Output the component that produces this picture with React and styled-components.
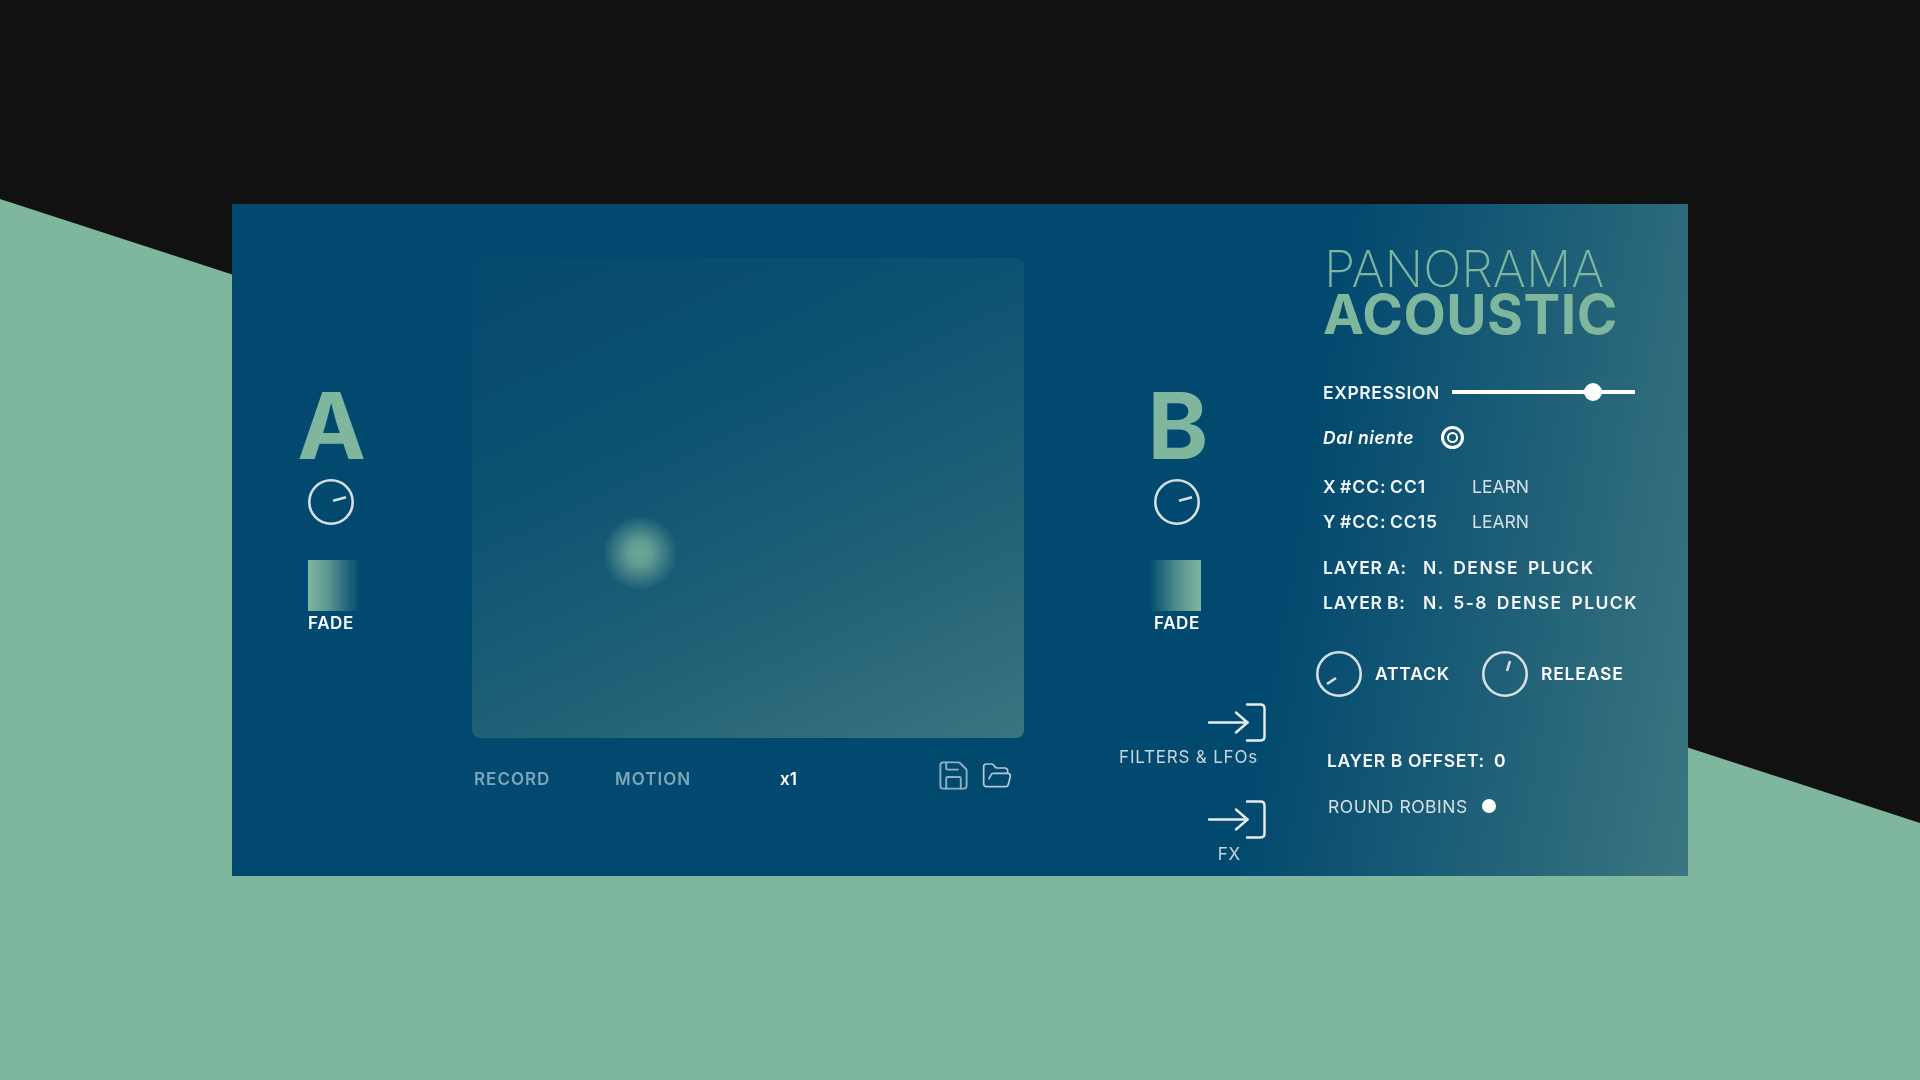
import React from "react";
import styled, { createGlobalStyle } from "styled-components";
import { Save, FolderOpen } from "lucide-react";

const GlobalStyle = createGlobalStyle`
  html, body { margin: 0; padding: 0; background: #111111; }
  body { font-family: Inter, "Liberation Sans", sans-serif; }
`;

const Stage = styled.div`
  position: relative;
  width: 1920px;
  height: 1080px;
  overflow: hidden;
  background: #111111;
  padding-top: 204px;
  box-sizing: border-box;
  &::before {
    content: "";
    position: absolute;
    inset: 0;
    background: #7fb69e;
    clip-path: polygon(0 199px, 100% 823px, 100% 100%, 0 100%);
  }
`;

const Panel = styled.section`
  position: relative;
  width: 1456px;
  height: 672px;
  margin: 0 auto;
  display: grid;
  grid-template-columns: 240px 552px 299px 1fr;
  background: linear-gradient(100deg, #02496f 0%, #02496f 71%, #3b7680 100%);
  color: #fff;
  filter: blur(0.35px);
`;

const Channel = styled.div`
  width: 198px;
  display: flex;
  flex-direction: column;
  align-items: center;
  padding-top: 184px;
`;

const ChannelB = styled(Channel)`
  margin-left: 54px;
`;

const Letter = styled.div`
  height: 76px;
  line-height: 76px;
  font-size: 92px;
  font-weight: 700;
  color: #7fb69e;
  margin-left: ${(p) => p.$nudge || 0}px;
`;

const KnobSvg = styled.svg`
  display: block;
  flex: none;
  width: 46px;
  height: 46px;
`;

const ChannelKnob = styled.div`
  margin-top: 15px;
`;

const Fade = styled.div`
  width: 52px;
  height: 51px;
  margin-top: 35px;
  margin-left: ${(p) => (p.$flip ? "-5px" : "5px")};
  background: linear-gradient(${(p) => (p.$flip ? "270deg" : "90deg")}, #7fb69e 0%, #5f9a92 35%, #02496f 100%);
`;

const FadeLabel = styled.div`
  margin-top: 2px;
  font-size: 17px;
  line-height: 20px;
  font-weight: 600;
  letter-spacing: 0.6px;
`;

const PadColumn = styled.div`
  padding-top: 54px;
`;

const Pad = styled.div`
  position: relative;
  height: 480px;
  border-radius: 8px;
  background: linear-gradient(155deg, #05496f 0%, #0c5272 35%, #1f6076 65%, #3a7580 100%);
`;

const Blob = styled.div`
  position: absolute;
  left: 128px;
  top: 255px;
  width: 80px;
  height: 80px;
  border-radius: 50%;
  background: radial-gradient(circle, rgba(127, 182, 158, 0.85) 0%, rgba(127, 182, 158, 0.7) 22%, rgba(127, 182, 158, 0) 66%);
`;

const Transport = styled.div`
  display: flex;
  align-items: center;
  height: 50px;
  margin-top: 16px;
`;

const TransportLabel = styled.span`
  font-size: 17px;
  font-weight: 600;
  letter-spacing: ${(p) => (p.$on ? 0 : 1)}px;
  color: ${(p) => (p.$on ? "#ffffff" : "#7fa6b8")};
  width: ${(p) => p.$w}px;
  padding-left: ${(p) => p.$pad || 0}px;
  box-sizing: border-box;
`;

const IconButton = styled.span`
  display: flex;
  color: ${(p) => p.$tint};
  width: ${(p) => p.$w}px;
  margin-top: -7px;
`;

const RouteStack = styled.div`
  display: flex;
  flex-direction: column;
  align-items: flex-end;
  padding-right: 57px;
  margin-top: 70px;
`;

const Route = styled.div`
  display: flex;
  flex-direction: column;
  align-items: flex-end;
  margin-bottom: 33px;
`;

const RouteSvg = styled.svg`
  display: block;
  width: 58px;
  height: 40px;
`;

const RouteLabel = styled.span`
  margin-top: 4px;
  margin-right: ${(p) => p.$inset}px;
  font-size: 17px;
  line-height: 20px;
  font-weight: 400;
  letter-spacing: 0.8px;
  color: #c6d6dd;
`;

const Side = styled.div`
  padding-top: 40px;
  display: flex;
  flex-direction: column;
`;

const Logo = styled.div`
  color: #7fb69e;
  height: 130px;
`;

const LogoTop = styled.div`
  font-size: 50.5px;
  line-height: 50px;
  font-weight: 200;
  margin-left: 1px;
`;

const LogoBottom = styled.div`
  font-size: 55px;
  line-height: 40px;
  font-weight: 700;
  letter-spacing: 0.5px;
`;

const Row = styled.div`
  display: flex;
  align-items: center;
  height: 36px;
  margin-top: ${(p) => p.$top || 0}px;
  margin-left: ${(p) => p.$left || 0}px;
  font-size: 17.5px;
  font-weight: 600;
  white-space: nowrap;
`;

const RowLabel = styled.span`
  font-weight: ${(p) => p.$weight || 600};
  width: ${(p) => p.$w}px;
  flex: none;
  color: ${(p) => p.$color || "#f4f8fa"};
  letter-spacing: ${(p) => p.$track || 0}px;
  word-spacing: ${(p) => p.$word || 0}px;
`;

const Track = styled.div`
  position: relative;
  width: 183px;
  height: 4px;
  background: #fff;
`;

const Thumb = styled.div`
  position: absolute;
  left: 132px;
  top: -7px;
  width: 18px;
  height: 18px;
  border-radius: 50%;
  background: #fff;
`;

const Italic = styled.span`
  font-style: italic;
  width: 118px;
  letter-spacing: 0.6px;
`;

const Target = styled.span`
  box-sizing: border-box;
  width: 23px;
  height: 23px;
  border-radius: 50%;
  border: 3.5px solid #fff;
  display: flex;
  align-items: center;
  justify-content: center;
  &::after {
    content: "";
    width: 7px;
    height: 7px;
    border-radius: 50%;
    border: 2px solid #fff;
  }
`;

const LayerValue = styled.span`
  letter-spacing: 1.45px;
  word-spacing: 3px;
  font-weight: 600;
  color: #f4f8fa;
  margin-left: -1px;
`;

const KnobRow = styled.div`
  display: flex;
  align-items: center;
  height: 46px;
  margin: 31px 0 0 -7px;
  font-size: 17.5px;
  font-weight: 600;
  letter-spacing: 0.8px;
`;

const KnobLabel = styled.span`
  margin-top: -2px;
  margin-left: 13px;
  width: ${(p) => p.$w}px;
`;

const Dot = styled.span`
  width: 14px;
  height: 14px;
  border-radius: 50%;
  background: #fff;
`;

const Knob = ({ x1, y1, x2, y2 }) => (
  <KnobSvg viewBox="0 0 46 46" fill="none" stroke="#d8dfe2">
    <circle cx="23" cy="23" r="21.7" strokeWidth="2.6" />
    <line x1={x1} y1={y1} x2={x2} y2={y2} strokeWidth="2.6" />
  </KnobSvg>
);

const RouteIcon = () => (
  <RouteSvg viewBox="0 0 58 40" fill="none" stroke="#e8eef0" strokeWidth="2.4" strokeLinecap="round" strokeLinejoin="round">
    <path d="M1 19.5H39.5" />
    <path d="M28 9.5L39.5 19.5L28 29.5" />
    <path d="M39 1.5H52.5Q56.5 1.5 56.5 5.5V33.5Q56.5 37.5 52.5 37.5H39" />
  </RouteSvg>
);

export default function App() {
  return (
    <Stage>
      <GlobalStyle />
      <Panel>
        <Channel>
          <Letter $nudge={1}>A</Letter>
          <ChannelKnob>
            <Knob x1="25" y1="21.8" x2="38" y2="18.3" />
          </ChannelKnob>
          <Fade />
          <FadeLabel>FADE</FadeLabel>
        </Channel>

        <PadColumn>
          <Pad>
            <Blob />
          </Pad>
          <Transport>
            <TransportLabel $w={143} $pad={2}>RECORD</TransportLabel>
            <TransportLabel $w={165}>MOTION</TransportLabel>
            <TransportLabel $w={156} $on>x1</TransportLabel>
            <IconButton $w={45} $tint="#8fb0bf">
              <Save size={35} strokeWidth={1.3} />
            </IconButton>
            <IconButton $w={32} $tint="#b3c8d1">
              <FolderOpen size={32} strokeWidth={1.3} />
            </IconButton>
          </Transport>
        </PadColumn>

        <div>
          <ChannelB>
            <Letter $nudge={2}>B</Letter>
            <ChannelKnob>
              <Knob x1="25" y1="21.8" x2="38" y2="18.3" />
            </ChannelKnob>
            <Fade $flip />
            <FadeLabel>FADE</FadeLabel>
          </ChannelB>
          <RouteStack>
            <Route>
              <RouteIcon />
              <RouteLabel $inset={8}>FILTERS &amp; LFOs</RouteLabel>
            </Route>
            <Route>
              <RouteIcon />
              <RouteLabel $inset={25}>FX</RouteLabel>
            </Route>
          </RouteStack>
        </div>

        <Side>
          <Logo>
            <LogoTop>PANORAMA</LogoTop>
            <LogoBottom>ACOUSTIC</LogoBottom>
          </Logo>
          <Row>
            <RowLabel $w={129} $track={0.6}>EXPRESSION</RowLabel>
            <Track>
              <Thumb />
            </Track>
          </Row>
          <Row $top={9}>
            <Italic>Dal niente</Italic>
            <Target />
          </Row>
          <Row $top={13}>
            <RowLabel $w={149} $track={1} $word={-2}>X #CC: CC1</RowLabel>
            <RowLabel $weight={400} $color="#d5e0e5">LEARN</RowLabel>
          </Row>
          <Row $top={-1}>
            <RowLabel $w={149} $track={1} $word={-2}>Y #CC: CC15</RowLabel>
            <RowLabel $weight={400} $color="#d5e0e5">LEARN</RowLabel>
          </Row>
          <Row $top={10}>
            <RowLabel $w={101} $track={0.8} $word={-1}>LAYER A:</RowLabel>
            <LayerValue>N. DENSE PLUCK</LayerValue>
          </Row>
          <Row $top={-1}>
            <RowLabel $w={101} $track={0.8} $word={-1}>LAYER B:</RowLabel>
            <LayerValue>N. 5-8 DENSE PLUCK</LayerValue>
          </Row>
          <KnobRow>
            <Knob x1="11" y1="33" x2="20" y2="27" />
            <KnobLabel $w={107}>ATTACK</KnobLabel>
            <Knob x1="25" y1="20" x2="28" y2="10" />
            <KnobLabel>RELEASE</KnobLabel>
          </KnobRow>
          <Row $top={45} $left={4}>
            <RowLabel $w={167} $track={0.6}>LAYER B OFFSET:</RowLabel>
            <span>0</span>
          </Row>
          <Row $top={10} $left={5}>
            <RowLabel $w={154} $weight={400} $color="#d5e0e5" $track={0.5}>ROUND ROBINS</RowLabel>
            <Dot />
          </Row>
        </Side>
      </Panel>
    </Stage>
  );
}
